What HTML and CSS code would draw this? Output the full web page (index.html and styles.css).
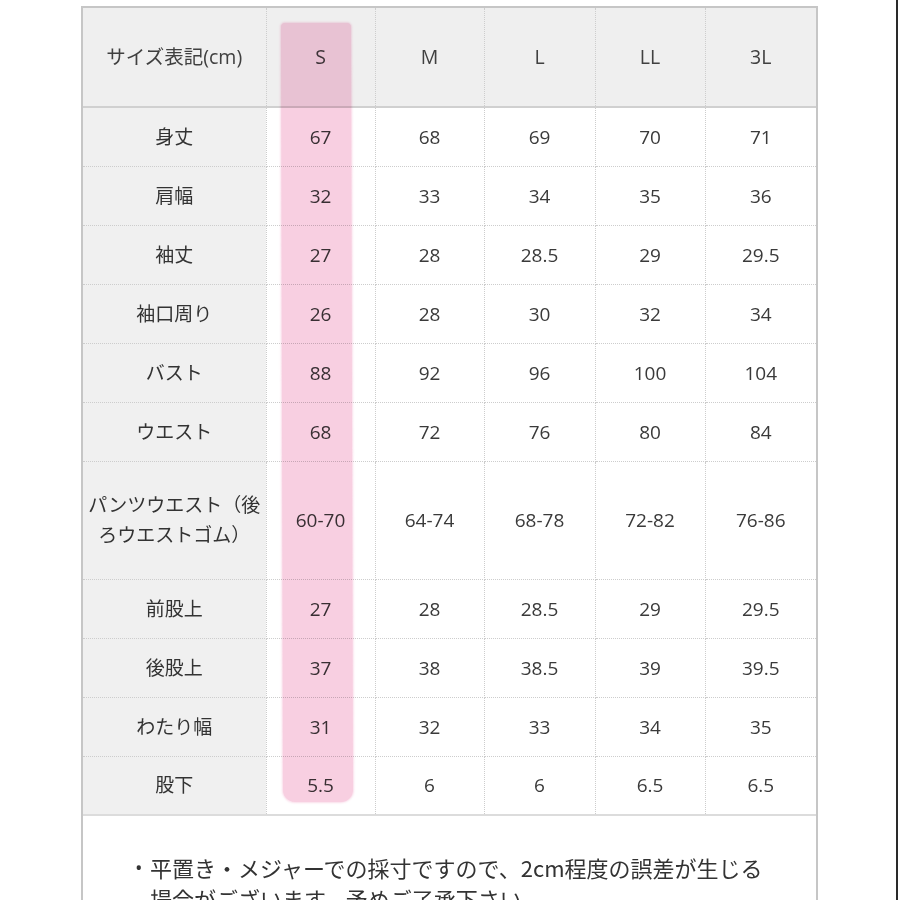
FILE: index.html
```html
<!DOCTYPE html>
<html lang="ja">
<head>
<meta charset="utf-8">
<title>サイズ表</title>
<link rel="stylesheet" href="styles.css">
</head>
<body>
<div class="page">
  <div class="sheet">
    <div class="table-wrap">
      <table class="size-table">
        <colgroup>
          <col class="c-label"><col class="c-s"><col class="c-m"><col class="c-l"><col class="c-ll"><col class="c-3l">
        </colgroup>
        <thead>
          <tr class="head-row">
            <th>サイズ表記(cm)</th><th>S</th><th>M</th><th>L</th><th>LL</th><th>3L</th>
          </tr>
        </thead>
        <tbody>
          <tr><th>身丈</th><td>67</td><td>68</td><td>69</td><td>70</td><td>71</td></tr>
          <tr><th>肩幅</th><td>32</td><td>33</td><td>34</td><td>35</td><td>36</td></tr>
          <tr><th>袖丈</th><td>27</td><td>28</td><td>28.5</td><td>29</td><td>29.5</td></tr>
          <tr><th>袖口周り</th><td>26</td><td>28</td><td>30</td><td>32</td><td>34</td></tr>
          <tr><th>バスト</th><td>88</td><td>92</td><td>96</td><td>100</td><td>104</td></tr>
          <tr><th>ウエスト</th><td>68</td><td>72</td><td>76</td><td>80</td><td>84</td></tr>
          <tr class="tall"><th>パンツウエスト（後<br>ろウエストゴム）</th><td>60-70</td><td>64-74</td><td>68-78</td><td>72-82</td><td>76-86</td></tr>
          <tr><th>前股上</th><td>27</td><td>28</td><td>28.5</td><td>29</td><td>29.5</td></tr>
          <tr><th>後股上</th><td>37</td><td>38</td><td>38.5</td><td>39</td><td>39.5</td></tr>
          <tr><th>わたり幅</th><td>31</td><td>32</td><td>33</td><td>34</td><td>35</td></tr>
          <tr class="last"><th>股下</th><td>5.5</td><td>6</td><td>6</td><td>6.5</td><td>6.5</td></tr>
        </tbody>
      </table>
      <div class="highlight"></div>
    </div>
    <div class="notes">
      <div class="note-item">
        <span class="bullet">•</span>
        <p class="note-text">平置き・メジャーでの採寸ですので、2cm程度の誤差が生じる<br>場合がございます。予めご了承下さい。</p>
      </div>
    </div>
  </div>
</div>
</body>
</html>
```

FILE: styles.css
```css
html, body {
  margin: 0;
  padding: 0;
  background: #ffffff;
}

.page {
  width: 898px;
  height: 900px;
  overflow: hidden;
  border-right: 2px solid #2a2a2a;
  padding-top: 6px;
  box-sizing: border-box;
  font-family: "Open Sans", "Noto Sans CJK JP", sans-serif;
  color: #3a3a3a;
}

.sheet {
  margin-left: 81px;
  width: 737px;
  border: 2px solid #c6c6c6;
  border-bottom: none;
  box-sizing: border-box;
  min-height: 1000px;
  background: #ffffff;
}

.table-wrap {
  position: relative;
}

.size-table {
  width: 733px;
  table-layout: fixed;
  border-collapse: collapse;
  font-size: 19px;
}

.c-label { width: 183px; }
.c-s { width: 109px; }
.c-m { width: 109px; }
.c-l { width: 111px; }
.c-ll { width: 110px; }
.c-3l { width: 111px; }

.size-table th,
.size-table td {
  padding: 0 2px;
  text-align: center;
  vertical-align: middle;
  font-weight: normal;
  border: 1px dotted #cdcdcd;
  line-height: 30px;
}

.size-table tr > :first-child { border-left: none; }
.size-table tr > :last-child { border-right: none; }

.head-row th {
  height: 98px;
  background: #efefef;
  border-top: none;
  border-bottom: 2px solid #d0d0d0;
  color: #404040;
  font-size: 19.5px;
}

.size-table tbody th {
  background: #f0f0f0;
  color: #333;
}

.size-table tbody td {
  background: #ffffff;
  color: #3a3a3a;
}

.size-table tbody tr { height: 59px; }
.size-table tbody tr.tall { height: 118px; }
.size-table tbody tr.last th,
.size-table tbody tr.last td {
  border-bottom: 2px solid #dcdcdc;
}

.highlight {
  position: absolute;
  left: 199px;
  top: 15px;
  width: 70px;
  height: 779px;
  background: #f8cfe1;
  mix-blend-mode: multiply;
  border-radius: 4px 4px 12px 12px;
  box-shadow: 0 0 2px 1px rgba(248, 207, 225, 0.7);
  transform: rotate(-0.15deg);
  pointer-events: none;
}

.notes {
  padding: 36px 20px 0 52px;
  font-size: 22px;
  color: #333;
}

.note-item {
  display: flex;
  align-items: flex-start;
}

.bullet {
  width: 15px;
  flex: none;
  line-height: 31px;
  font-size: 20px;
}

.note-text {
  margin: 0;
  line-height: 31px;
  font-family: "Noto Sans CJK JP", "Open Sans", sans-serif;
}
```
